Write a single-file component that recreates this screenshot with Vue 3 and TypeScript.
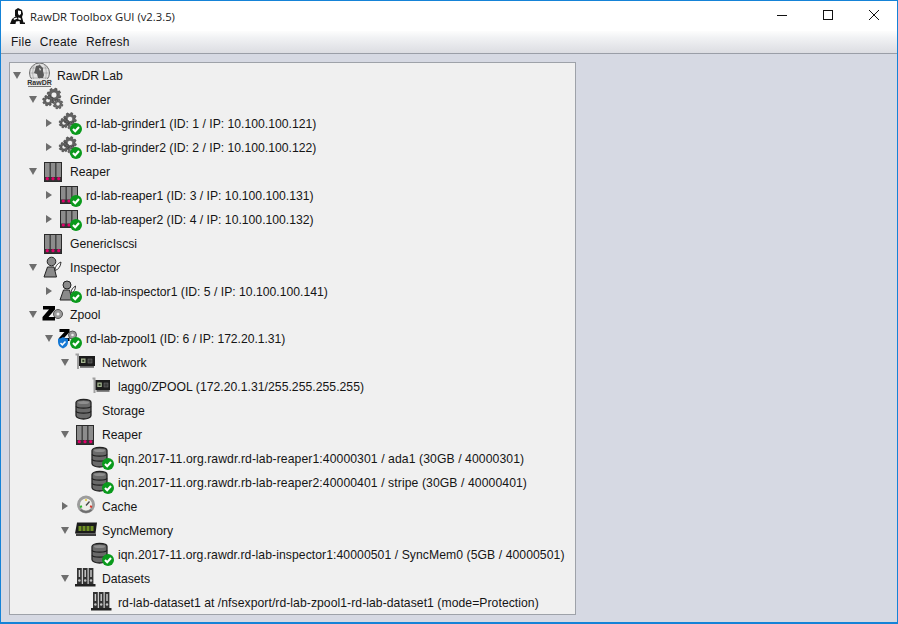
<script setup lang="ts">
interface Badge {
  kind: 'ok' | 'shield'
  x: number
  y: number
}

interface TreeRow {
  level: number
  arrow?: 'open' | 'closed'
  icon: string
  label: string
  badges?: Badge[]
  wide?: boolean
  short?: boolean
  track?: number // small letter-spacing so the long labels end where they should
}

const ok: Badge = { kind: 'ok', x: 18, y: 18 }

const rows: TreeRow[] = [
  { level: 0, arrow: 'open', icon: 'logo', label: 'RawDR Lab', wide: true },
  { level: 1, arrow: 'open', icon: 'gears', label: 'Grinder' },
  { level: 2, arrow: 'closed', icon: 'gears-s', label: 'rd-lab-grinder1 (ID: 1 / IP: 10.100.100.121)', badges: [ok] },
  { level: 2, arrow: 'closed', icon: 'gears-s', label: 'rd-lab-grinder2 (ID: 2 / IP: 10.100.100.122)', badges: [ok] },
  { level: 1, arrow: 'open', icon: 'server', label: 'Reaper' },
  { level: 2, arrow: 'closed', icon: 'server-s', label: 'rd-lab-reaper1 (ID: 3 / IP: 10.100.100.131)', badges: [ok] },
  { level: 2, arrow: 'closed', icon: 'server-s', label: 'rb-lab-reaper2 (ID: 4 / IP: 10.100.100.132)', badges: [ok] },
  { level: 1, icon: 'server', label: 'GenericIscsi' },
  { level: 1, arrow: 'open', icon: 'inspector', label: 'Inspector' },
  { level: 2, arrow: 'closed', icon: 'inspector-s', label: 'rd-lab-inspector1 (ID: 5 / IP: 10.100.100.141)', badges: [ok], short: true },
  { level: 1, arrow: 'open', icon: 'zpool', label: 'Zpool' },
  {
    level: 2,
    arrow: 'open',
    icon: 'zpool-s',
    label: 'rd-lab-zpool1 (ID: 6 / IP: 172.20.1.31)',
    badges: [{ kind: 'shield', x: 5, y: 17 }, { kind: 'ok', x: 18, y: 17 }],
    track: -0.05,
  },
  { level: 3, arrow: 'open', icon: 'nic', label: 'Network' },
  { level: 4, icon: 'nic-s', label: 'lagg0/ZPOOL (172.20.1.31/255.255.255.255)', track: 0.03 },
  { level: 3, icon: 'db', label: 'Storage' },
  { level: 3, arrow: 'open', icon: 'server', label: 'Reaper' },
  { level: 4, icon: 'db', label: 'iqn.2017-11.org.rawdr.rd-lab-reaper1:40000301 / ada1 (30GB / 40000301)', badges: [ok], track: 0.085 },
  { level: 4, icon: 'db', label: 'iqn.2017-11.org.rawdr.rb-lab-reaper2:40000401 / stripe (30GB / 40000401)', badges: [ok], track: 0.085 },
  { level: 3, arrow: 'closed', icon: 'gauge', label: 'Cache' },
  { level: 3, arrow: 'open', icon: 'ram', label: 'SyncMemory' },
  { level: 4, icon: 'db', label: 'iqn.2017-11.org.rawdr.rd-lab-inspector1:40000501 / SyncMem0 (5GB / 40000501)', badges: [ok], track: 0.066 },
  { level: 3, arrow: 'open', icon: 'dataset', label: 'Datasets' },
  { level: 4, icon: 'dataset', label: 'rd-lab-dataset1 at /nfsexport/rd-lab-zpool1-rd-lab-dataset1 (mode=Protection)', track: 0.05 },
]

// toothed ring with a round hole, for the grinder icons
function gear(cx: number, cy: number, r: number, teeth: number): string {
  const pts: string[] = []
  const step = (Math.PI * 2) / teeth
  for (let i = 0; i < teeth; i++) {
    const a = i * step + 0.3
    const corners: [number, number][] = [
      [r * 0.78, a - step * 0.34],
      [r, a - step * 0.2],
      [r, a + step * 0.2],
      [r * 0.78, a + step * 0.34],
    ]
    for (const [rad, an] of corners) {
      pts.push(`${(cx + rad * Math.cos(an)).toFixed(2)} ${(cy + rad * Math.sin(an)).toFixed(2)}`)
    }
  }
  const h = r * 0.42
  return `M${pts.join('L')}Z M${cx - h} ${cy}a${h} ${h} 0 1 0 ${h * 2} 0a${h} ${h} 0 1 0 ${-h * 2} 0Z`
}
</script>

<template>
  <div class="window">
    <svg class="defs" width="0" height="0" aria-hidden="true">
      <symbol id="logo" viewBox="0 0 27 24">
        <circle cx="13.500" cy="10" r="10" fill="#e2e2e2" stroke="#6e6e6e" />
        <path d="M5 5h17M3.800 10h19.400M5 15h17M13.500 0v20M9 1c-3 5-3 13 0 18M18 1c3 5 3 13 0 18" fill="none" stroke="#9a9a9a" stroke-width=".6" />
        <path d="M10 3l4-1 3 3v3l1 4-1 3h-5l-1-4-3-1 1-3z" fill="#5a5a5a" />
        <path d="M13 5l2 1-1 2z" fill="#eee" />
        <rect x="2" y="16" width="23" height="8" fill="#e8e8e8" />
        <path d="M2 23.500h23" stroke="#777" />
      </symbol>

      <symbol id="gears" viewBox="0 0 24 24">
        <path :d="gear(12, 8, 7, 8)" fill="#636363" stroke="#333" stroke-width=".5" fill-rule="evenodd" />
        <path :d="gear(6, 13.500, 5.500, 8)" fill="#636363" stroke="#333" stroke-width=".5" fill-rule="evenodd" />
        <path :d="gear(16, 17, 5, 8)" fill="#6e6e6e" stroke="#333" stroke-width=".5" fill-rule="evenodd" />
      </symbol>
      <symbol id="gears-s" viewBox="0 0 24 24">
        <path :d="gear(12, 8, 6.500, 8)" fill="#636363" stroke="#333" stroke-width=".5" fill-rule="evenodd" />
        <path :d="gear(6, 12, 5, 8)" fill="#636363" stroke="#333" stroke-width=".5" fill-rule="evenodd" />
        <path :d="gear(14, 15, 4.500, 8)" fill="#6e6e6e" stroke="#333" stroke-width=".5" fill-rule="evenodd" />
      </symbol>

      <symbol id="server" viewBox="0 0 24 24">
        <rect x="2" y="3" width="18" height="20" fill="#2a2a2a" />
        <rect x="3" y="4" width="4.600" height="18" fill="#8c8c8c" />
        <rect x="8.700" y="4" width="4.600" height="18" fill="#8c8c8c" />
        <rect x="14.400" y="4" width="4.600" height="18" fill="#8c8c8c" />
        <path d="M3 18h16v4H3z" fill="#333" />
        <circle cx="5.300" cy="19.700" r="1.600" fill="#e0006a" />
        <circle cx="11" cy="19.700" r="1.600" fill="#e0006a" />
        <circle cx="16.700" cy="19.700" r="1.600" fill="#e0006a" />
      </symbol>
      <symbol id="server-s" viewBox="0 0 24 24">
        <rect x="2" y="3" width="18" height="18" fill="#2a2a2a" />
        <rect x="3" y="4" width="4.600" height="16" fill="#8c8c8c" />
        <rect x="8.700" y="4" width="4.600" height="16" fill="#8c8c8c" />
        <rect x="14.400" y="4" width="4.600" height="16" fill="#8c8c8c" />
        <path d="M3 16.500h16V20H3z" fill="#333" />
        <circle cx="5.300" cy="18" r="1.600" fill="#e0006a" />
        <circle cx="11" cy="18" r="1.600" fill="#e0006a" />
      </symbol>

      <symbol id="inspector" viewBox="0 0 24 24">
        <path d="M5.500 12h6.500l2.500 10H2z" fill="#8a8a8a" stroke="#222" stroke-linejoin="round" />
        <circle cx="9.500" cy="6.500" r="4.300" fill="#8a8a8a" stroke="#222" />
        <path d="M13 15.500c0-4 2.500-7 6-8.500-.3 4.500-2.500 7.500-6 8.500z" fill="#fff" stroke="#222" stroke-width=".9" />
      </symbol>
      <symbol id="inspector-s" viewBox="0 0 24 24">
        <path d="M5.500 11h6l2.500 10H2z" fill="#8a8a8a" stroke="#222" stroke-linejoin="round" />
        <circle cx="9" cy="6" r="4" fill="#8a8a8a" stroke="#222" />
        <path d="M13 14c0-3 2-5.500 4.500-7 0 3.500-1.500 6-4.500 7z" fill="#fff" stroke="#222" stroke-width=".9" />
      </symbol>

      <symbol id="zpool" viewBox="0 0 24 24">
        <circle cx="16" cy="12" r="4.500" fill="#9a9a9a" stroke="#555" />
        <circle cx="16" cy="12" r="1.500" fill="#eee" />
        <path d="M1 4h12v3.500L6.500 15H13v3.500H0.500V15L7 7.500H1z" fill="#000" />
      </symbol>
      <symbol id="zpool-s" viewBox="0 0 24 24">
        <circle cx="14.500" cy="9" r="4" fill="#9a9a9a" stroke="#555" />
        <circle cx="14.500" cy="9" r="1.300" fill="#eee" />
        <path d="M1.500 3h10v3L6 12h5.500v3H1v-3l5.500-6h-5z" fill="#000" />
      </symbol>

      <symbol id="nic" viewBox="0 0 24 24">
        <path d="M1.500 4.500h2.500v14.500" fill="none" stroke="#a0a0a0" stroke-width="2" />
        <rect x="5" y="6" width="16" height="10" fill="#1c1c1c" />
        <rect x="7" y="8.500" width="4.500" height="4.500" fill="#a5b592" />
        <rect x="8.300" y="9.800" width="2" height="2" fill="#2c3a22" />
        <rect x="14" y="9" width="4" height="4" fill="#3a3a3a" stroke="#777" stroke-width=".5" />
        <path d="M6 16h14v1.800H6z" fill="#6b6b6b" />
      </symbol>
      <symbol id="nic-s" viewBox="0 0 24 24">
        <path d="M2.500 4.500h2v14.500" fill="none" stroke="#a0a0a0" stroke-width="2" />
        <rect x="5.500" y="6" width="14.500" height="10" fill="#1c1c1c" />
        <rect x="7.300" y="8.500" width="4.500" height="4.500" fill="#a5b592" />
        <rect x="8.600" y="9.800" width="2" height="2" fill="#2c3a22" />
        <rect x="14" y="9" width="4" height="4" fill="#3a3a3a" stroke="#777" stroke-width=".5" />
        <path d="M6.500 16h13v1.800h-13z" fill="#6b6b6b" />
      </symbol>

      <symbol id="db" viewBox="0 0 24 24">
        <path d="M2 4.500C2 2.500 5.500 1.500 9.500 1.500s7.500 1 7.500 3v13c0 2-3.500 3.500-7.500 3.500S2 19.500 2 17.500z" fill="#6a6a6a" stroke="#222" stroke-width="1.300" />
        <ellipse cx="9.500" cy="4.500" rx="5.500" ry="1.500" fill="#8e8e8e" />
        <path d="M2 8.500c1.500 2.200 13.500 2.200 15 0M2 13.500c1.500 2.200 13.500 2.200 15 0" fill="none" stroke="#1d1d1d" stroke-width="1.300" />
      </symbol>

      <symbol id="gauge" viewBox="0 0 24 24">
        <circle cx="12" cy="10.500" r="7.500" fill="#eeeee8" stroke="#9c9c9c" stroke-width="3" />
        <path d="M6 13l2-.7" stroke="#2eb82e" stroke-width="2" />
        <path d="M12 5v2" stroke="#e6c62e" stroke-width="1.500" />
        <path d="M18 13l-2-.7" stroke="#d63a2e" stroke-width="2" />
        <path d="M12 11.500l3.500-4" stroke="#444" stroke-width="1.300" />
        <path d="M6.500 16c3 2.500 8 2.500 11 0" fill="none" stroke="#6e6e6e" stroke-width="2" />
      </symbol>

      <symbol id="ram" viewBox="0 0 24 24">
        <path d="M3 4.500h20l-1.500 11H1z" fill="#1b1b1b" />
        <rect x="4.500" y="8" width="3" height="5" fill="#6f8f24" />
        <rect x="8.500" y="8" width="3" height="5" fill="#6f8f24" />
        <rect x="12.500" y="8" width="3" height="5" fill="#6f8f24" />
        <rect x="16.500" y="8" width="3" height="5" fill="#6f8f24" />
        <path d="M2 15.500h20V18H2z" fill="#3e3e3e" />
      </symbol>

      <symbol id="dataset" viewBox="0 0 24 24">
        <rect x="3" y="2" width="4.800" height="16" fill="#333" />
        <rect x="8.800" y="2" width="4.800" height="16" fill="#333" />
        <rect x="14.600" y="2" width="4.800" height="16" fill="#333" />
        <path d="M5.400 4v7M11.200 4v7M17 4v7" stroke="#cfcfcf" stroke-width="1.400" />
        <circle cx="5.400" cy="14.500" r="1.200" fill="#c4c4c4" />
        <circle cx="11.200" cy="14.500" r="1.200" fill="#c4c4c4" />
        <circle cx="17" cy="14.500" r="1.200" fill="#c4c4c4" />
        <path d="M1 18h20.500v2.500H1z" fill="#222" />
      </symbol>
    </svg>

    <header class="titlebar">
      <svg class="app-icon" width="16" height="16" viewBox="0 0 16 16">
        <path d="M6 2l3-2 4 2 1 4-1 3-3 1-4-2z" fill="#111" />
        <path d="M9 2.500l3 .5v3l-2 1.500-1-2z" fill="#fff" />
        <path d="M7 8l6 1 1.500 5.500H16V16h-5l-.5-3-3.500.5L6.500 16H1l2-5z" fill="#111" />
        <path d="M4.500 10.500l3-1 1 1-3.500 1.500zM9 9.500l2.500.5.5 2-2.500-.5z" fill="#fff" />
      </svg>
      <span class="title">RawDR Toolbox GUI (v2.3.5)</span>
      <div class="winbtns">
        <span class="winbtn"><svg width="12" height="12" viewBox="0 0 12 12"><path d="M1 6.500h10" stroke="#111" /></svg></span>
        <span class="winbtn"><svg width="12" height="12" viewBox="0 0 12 12"><rect x="1.500" y="1.500" width="9" height="9" fill="none" stroke="#111" /></svg></span>
        <span class="winbtn"><svg width="12" height="12" viewBox="0 0 12 12"><path d="M1 1l10 10M11 1L1 11" stroke="#111" /></svg></span>
      </div>
    </header>

    <nav class="menubar">
      <span>File</span>
      <span>Create</span>
      <span>Refresh</span>
    </nav>

    <main class="content">
      <div class="tree">
        <div
          v-for="(r, i) in rows"
          :key="i"
          class="row"
          :class="{ short: r.short }"
          :style="{ paddingLeft: r.level * 16 + 'px' }"
        >
          <span class="arrow-cell">
            <i v-if="r.arrow" :class="r.arrow"></i>
          </span>
          <span class="icon-cell" :class="{ wide: r.wide }">
            <svg :width="r.wide ? 27 : 24" height="24">
              <use :href="'#' + r.icon" />
              <text v-if="r.wide" x="13.500" y="22" text-anchor="middle" class="logo-text">RawDR</text>
              <template v-for="b in r.badges" :key="b.kind">
                <g v-if="b.kind === 'ok'">
                  <circle :cx="b.x" :cy="b.y" r="6" fill="#0a9a1c" />
                  <path :d="`M${b.x - 3} ${b.y}l2.200 2.300 3.800-4.300`" fill="none" stroke="#fff" stroke-width="2.100" />
                </g>
                <g v-else>
                  <path :d="`M${b.x - 5} ${b.y - 4.500}q2.500 .2 5-1.500q2.500 1.700 5 1.500v3.500q0 4.500-5 6.500q-5-2-5-6.500z`" fill="#1578d4" />
                  <path :d="`M${b.x - 2.500} ${b.y}l1.800 1.800 3.200-3.400`" fill="none" stroke="#fff" stroke-width="1.500" />
                </g>
              </template>
            </svg>
          </span>
          <span class="label" :style="r.track ? { letterSpacing: r.track + 'px' } : undefined">{{ r.label }}</span>
        </div>
      </div>
    </main>
  </div>
</template>

<style>
html, body {
  margin: 0;
  overflow: hidden;
}
</style>

<style scoped>
.window {
  width: 898px;
  height: 624px;
  box-sizing: border-box;
  border: 1px solid #1583d7;
  border-bottom-width: 2px;
  display: flex;
  flex-direction: column;
  font-family: "Liberation Sans", Arial, sans-serif;
  color: #151515;
  overflow: hidden;
}

.defs {
  display: block;
}

.logo-text {
  font-family: "Liberation Sans", Arial, sans-serif;
  font-size: 7px;
  font-weight: 700;
  fill: #333;
}

.titlebar {
  height: 30px;
  flex: none;
  background: #fff;
  display: flex;
  align-items: center;
  padding-left: 8px;
}

.app-icon {
  margin-right: 5px;
}

.title {
  font-family: "Open Sans", sans-serif;
  font-size: 11.25px;
  color: #222;
}

.winbtns {
  margin-left: auto;
  display: flex;
}

.winbtn {
  width: 46px;
  height: 30px;
  box-sizing: border-box;
  padding-bottom: 2px;
  display: flex;
  align-items: center;
  justify-content: center;
}

.menubar {
  height: 23px;
  flex: none;
  box-sizing: border-box;
  background: linear-gradient(#fdfdfd, #f1f2f4 30%, #dcdde2);
  border-bottom: 1px solid #9a9ea7;
  display: flex;
  gap: 8.5px;
  align-items: center;
  padding-left: 10px;
  font-size: 12px;
  letter-spacing: 0.25px;
}

.content {
  flex: 1;
  min-height: 0;
  background: #d6d9e3;
  padding: 8px 0 0 8px;
}

.tree {
  width: 567px;
  height: 553px;
  box-sizing: border-box;
  border: 1px solid #9ea2a9;
  background: #f0f0f0;
  overflow: hidden;
}

.row {
  height: 24px;
  display: flex;
  align-items: flex-start;
  font-size: 12.2px;
  white-space: nowrap;
}

.row.short {
  height: 23px;
}

.arrow-cell {
  width: 16px;
  height: 24px;
  flex: none;
  display: flex;
  align-items: center;
  justify-content: center;
  padding-right: 2px;
  box-sizing: border-box;
}

.open {
  width: 0;
  height: 0;
  border-left: 4px solid transparent;
  border-right: 4px solid transparent;
  border-top: 7px solid #6e6e6e;
}

.closed {
  width: 0;
  height: 0;
  border-top: 4px solid transparent;
  border-bottom: 4px solid transparent;
  border-left: 6px solid #6e6e6e;
}

.icon-cell {
  width: 24px;
  height: 24px;
  flex: none;
  margin-right: 4px;
}

.icon-cell.wide {
  width: 27px;
}

.label {
  line-height: 22px;
  padding-top: 2px;
}
</style>
